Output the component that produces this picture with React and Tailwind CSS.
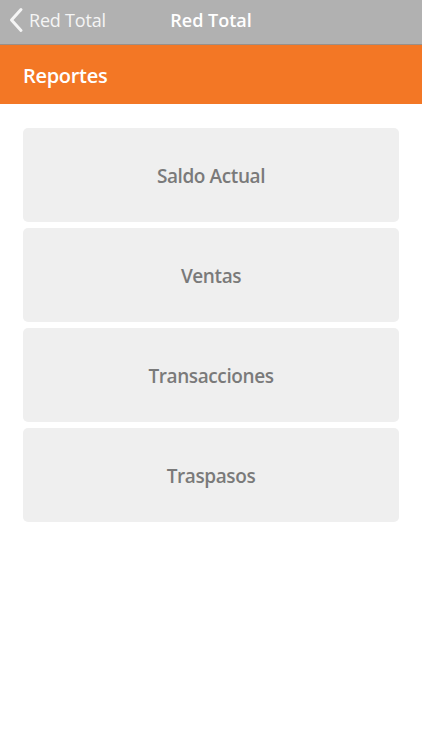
const items = ['Saldo Actual', 'Ventas', 'Transacciones', 'Traspasos'];

export default function App() {
  return (
    <div className="min-h-[750px] bg-white" style={{ fontFamily: '"Open Sans", "Liberation Sans", sans-serif' }}>
      <div className="relative h-[45px] bg-[#b1b1b1] flex items-center pb-[4px] border-b border-[#9a8f88]">
        <div className="flex items-center pl-[9px] text-[#f5f5f5]">
          <svg width="15" height="26" viewBox="0 0 15 26" fill="none" stroke="currentColor" strokeWidth="3" strokeLinecap="round" strokeLinejoin="round">
            <path d="M12 2.5 2.5 13l9.5 10.5" />
          </svg>
          <span className="ml-[5px] text-[18px] tracking-[-0.2px]">Red Total</span>
        </div>
        <span className="absolute left-1/2 top-[20px] -translate-x-1/2 -translate-y-1/2 text-[18px] font-semibold text-white">Red Total</span>
      </div>
      <div className="h-[59px] bg-[#f37725] flex items-center px-[23px] pt-[2px]">
        <h1 className="text-[20px] font-semibold text-white tracking-[-0.3px]">Reportes</h1>
      </div>
      <div className="flex flex-col gap-[6px] px-[23px] pt-[24px]">
        {items.map(t => (
          <button key={t} className="h-[94px] rounded-[5px] bg-[#efefef] flex items-center justify-center pt-[3px] text-[19px] font-semibold text-[#7a7a7a] tracking-[-0.4px]">
            {t}
          </button>
        ))}
      </div>
    </div>
  );
}
